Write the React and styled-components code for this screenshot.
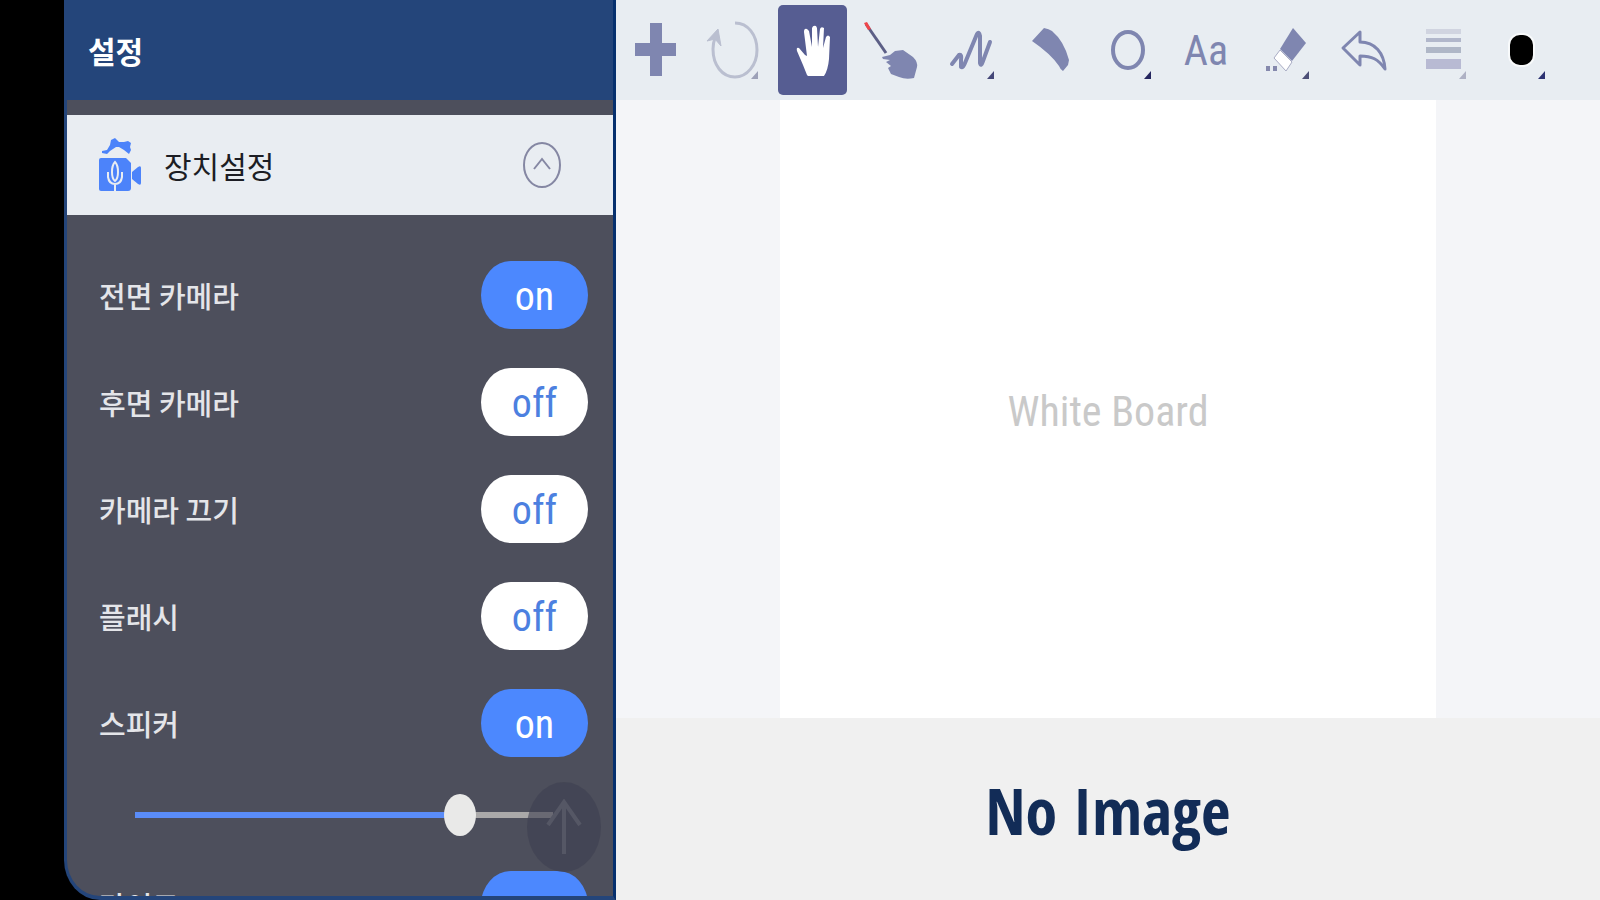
import React, { useState } from "react";
import styled, { createGlobalStyle } from "styled-components";

const GlobalStyle = createGlobalStyle`
  *, *::before, *::after { box-sizing: border-box; }
  body {
    margin: 0;
    background: #000;
    font-family: "Noto Sans", "Noto Sans CJK KR", sans-serif;
  }
  button { font: inherit; border: 0; padding: 0; background: none; cursor: pointer; }
`;

const ink = "#7f86b0";

const Page = styled.div`
  display: grid;
  grid-template-columns: 4fr 34.5fr 61.5fr;
  height: 100vh;
  background: #000;
`;

const Panel = styled.aside`
  grid-column: 2;
  position: relative;
  display: flex;
  flex-direction: column;
  min-width: 0;
  overflow: hidden;
  background: #4d4f5c;
  border: solid #24457a;
  border-width: 0 3px 4px 3px;
  border-right-color: #06306e;
  border-bottom-left-radius: 36px 40px;
`;

const PanelHeader = styled.header`
  flex: none;
  display: flex;
  align-items: center;
  height: 100px;
  padding: 0 20px 0 21px;
  background: #24457a;
`;

const Title = styled.h1`
  margin: 0;
  color: #fff;
  font-family: "Noto Sans CJK KR", sans-serif;
  font-size: 30px;
  line-height: 40px;
  font-weight: 700;
`;

const SectionBar = styled.div`
  flex: none;
  display: flex;
  align-items: center;
  gap: 22px;
  height: 100px;
  margin-top: 15px;
  padding: 0 52px 0 30px;
  background: #e9edf2;
`;

const SectionName = styled.h2`
  flex: 1;
  margin: 0;
  color: #1c1d24;
  font-family: "Noto Sans CJK KR", sans-serif;
  font-size: 30px;
  line-height: 40px;
  font-weight: 400;
`;

const CollapseButton = styled.button`
  display: flex;
`;

const Settings = styled.div`
  display: flex;
  flex-direction: column;
  gap: 39px;
  padding: 46px 25px 0 32px;
`;

const SettingRow = styled.div`
  flex: none;
  display: flex;
  align-items: center;
  justify-content: space-between;
  height: 68px;
`;

const SettingLabel = styled.label`
  color: #e4e5e9;
  font-family: "Noto Sans CJK KR", sans-serif;
  font-size: 29px;
  line-height: 40px;
  font-weight: 500;
`;

const Toggle = styled.button`
  width: 107px;
  height: 68px;
  padding-top: 4px;
  border-radius: 30px / 34px;
  background: ${(p) => (p.$on ? "#4c88fe" : "#fff")};
  color: ${(p) => (p.$on ? "#fff" : "#4c80e0")};
  font-family: "Roboto Condensed", Roboto, sans-serif;
  font-size: 40px;
  line-height: 40px;
`;

const VolumeRow = styled.div`
  flex: none;
  display: flex;
  align-items: center;
  height: 42px;
  margin: -2px 35px -4px 36px;
`;

const Volume = styled.input`
  appearance: none;
  width: 100%;
  height: 42px;
  margin: 0;
  background: transparent;

  &::-webkit-slider-runnable-track {
    height: 6px;
    background: linear-gradient(
      to right,
      #5a8cf8 0 ${(p) => p.value}%,
      #aaa9a9 ${(p) => p.value}% 100%
    );
  }
  &::-webkit-slider-thumb {
    appearance: none;
    width: 32px;
    height: 42px;
    margin-top: -18px;
    border-radius: 50%;
    background: #e9e9e8;
  }
`;

const ScrollTop = styled.button`
  position: absolute;
  right: 12px;
  bottom: 24px;
  display: grid;
  place-items: center;
  width: 74px;
  height: 90px;
  border-radius: 50%;
  background: rgba(62, 63, 80, 0.6);
`;

const Main = styled.main`
  display: grid;
  grid-template-rows: 100px 1fr 182px;
  min-width: 0;
  background: #f4f5f8;
`;

const Toolbar = styled.nav`
  display: grid;
  grid-template-columns: repeat(12, minmax(0, 1fr));
  padding-right: 40px;
  background: #e8edf2;
`;

const Tool = styled.button`
  display: flex;
  align-items: center;
  justify-content: center;
  min-width: 0;
  height: 90px;
  margin: 5px 0;
  color: ${ink};
`;

const ActiveTool = styled(Tool)`
  margin: 5px;
  border-radius: 5px;
  background: #565d92;
  color: #fff;
`;

const ToolDrawing = styled.svg`
  flex: none;
  width: 78px;
  height: 90px;
`;

const TextTool = styled(Tool)`
  padding-top: 2px;
  font-family: "Roboto Condensed", Roboto, sans-serif;
  font-size: 42px;
  line-height: 48px;
  font-weight: 400;
`;

const Workspace = styled.section`
  display: grid;
  grid-template-columns: 1fr 4fr 1fr;
`;

const Board = styled.div`
  grid-column: 2;
  display: grid;
  place-items: center;
  padding-top: 6px;
  background: #fff;
  color: #c9c9c9;
  font-family: "Roboto Condensed", Roboto, sans-serif;
  font-size: 42px;
  line-height: 48px;
`;

const Preview = styled.footer`
  display: grid;
  place-items: center;
  padding-top: 4px;
  background: #f0f0f0;
  color: #122c57;
  font-family: "Open Sans Condensed", "Noto Sans", sans-serif;
  font-size: 64px;
  line-height: 72px;
  font-weight: 600;
`;

function Drawing({ children, corner }) {
  return (
    <ToolDrawing viewBox="0 5 78 90" fill="none" aria-hidden="true">
      {children}
      {corner && <path d="M63 71v8h-7z" fill={corner} />}
    </ToolDrawing>
  );
}

function DeviceIcon() {
  return (
    <svg width="45" height="54" viewBox="0 0 45 54" aria-hidden="true">
      <path
        d="M5 13 10 12 13 7 14 2 18 0 22 4H27L31 3 34 5 33 9 34 12 32 16 27 12 22 9H19L13 13 10 16 5 15Z"
        fill="#4c83fa"
      />
      <path d="M4 20H29L34 25V50Q34 53 31 53H4Q2 53 2 51V22Q2 20 4 20Z" fill="#4c83fa" />
      <path d="M35 34 41 29Q44 27 44 30V45Q44 48 41 46L35 41Z" fill="#4c83fa" />
      <path
        d="M18 24Q21 27 21 34T18 43Q15 41 15 34T18 24Z"
        fill="#4c83fa"
        stroke="#e9edf2"
        strokeWidth="2"
      />
      <path d="M11 34V39Q12 46 18 46T25 39V34M18 46V54" fill="none" stroke="#e9edf2" strokeWidth="2" />
    </svg>
  );
}

function CollapseIcon() {
  return (
    <svg width="38" height="46" viewBox="0 0 38 46" fill="none" stroke="#8587a3" aria-hidden="true">
      <ellipse cx="19" cy="23" rx="18" ry="22" strokeWidth="2" />
      <path d="m11 27 8-10 8 10" strokeWidth="2" />
    </svg>
  );
}

function Setting({ id, name, initial }) {
  const [on, setOn] = useState(initial);
  return (
    <SettingRow>
      <SettingLabel htmlFor={id}>{name}</SettingLabel>
      <Toggle id={id} type="button" role="switch" aria-checked={on} $on={on} onClick={() => setOn(!on)}>
        {on ? "on" : "off"}
      </Toggle>
    </SettingRow>
  );
}

function SettingsPanel() {
  const [volume, setVolume] = useState(80);
  return (
    <Panel>
      <PanelHeader>
        <Title>설정</Title>
      </PanelHeader>
      <SectionBar>
        <DeviceIcon />
        <SectionName>장치설정</SectionName>
        <CollapseButton type="button" aria-label="장치설정 접기">
          <CollapseIcon />
        </CollapseButton>
      </SectionBar>
      <Settings>
        <Setting id="front" name="전면 카메라" initial={true} />
        <Setting id="rear" name="후면 카메라" initial={false} />
        <Setting id="camera-off" name="카메라 끄기" initial={false} />
        <Setting id="flash" name="플래시" initial={false} />
        <Setting id="speaker" name="스피커" initial={true} />
        <VolumeRow>
          <Volume
            type="range"
            min="0"
            max="100"
            aria-label="스피커 음량"
            value={volume}
            onChange={(e) => setVolume(Number(e.target.value))}
          />
        </VolumeRow>
        <Setting id="mic" name="마이크" initial={true} />
      </Settings>
      <ScrollTop type="button" aria-label="맨 위로">
        <svg width="36" height="56" viewBox="0 0 36 56" fill="none" stroke="#555765" strokeWidth="4" aria-hidden="true">
          <path d="M18 55V4M2 26 18 3 34 26" />
        </svg>
      </ScrollTop>
    </Panel>
  );
}

function DrawingTools() {
  return (
    <Toolbar aria-label="그리기 도구">
      <Tool type="button" aria-label="추가">
        <Drawing>
          <path d="M34 23H46V43H60V56H46V76H34V56H19V43H34Z" fill={ink} />
        </Drawing>
      </Tool>
      <Tool type="button" aria-label="회전">
        <Drawing corner="#9da1b8">
          <path d="M40 23C53 23 62 35 62 50S52 77 40 77C27 77 18 65 18 49Q18 43 20 38" stroke="#babfd0" strokeWidth="3" />
          <path d="M12 41 23 29 26 46 20 39Z" fill="#babfd0" stroke="#babfd0" strokeWidth="1" />
        </Drawing>
      </Tool>
      <ActiveTool type="button" aria-label="이동" aria-pressed="true">
        <Drawing>
          <path
            d="M33 75 29 65 23 51Q22 47 25 48L31 55 33 56 30 32Q30 28 33 29L35 31 38 47 38 28Q39 25 42 26L43 28 44 47 46 29Q47 26 50 28L49 48 52 37Q54 34 56 37L55 59Q54 70 50 76H34Z"
            fill="#fff"
          />
        </Drawing>
      </ActiveTool>
      <Tool type="button" aria-label="포인터">
        <Drawing>
          <path d="M14 24 34 53" stroke="#5c5f86" strokeWidth="3" />
          <path d="M12 23 15 22 19 29 16 30Z" fill="#f0454a" />
          <path
            d="M30 57 38 55 43 51 51 50 61 57Q66 62 65 67L62 78Q54 80 47 77L39 74 36 68 39 66 34 62 38 60 31 59Z"
            fill={ink}
          />
        </Drawing>
      </Tool>
      <Tool type="button" aria-label="펜">
        <Drawing corner="#444778">
          <path
            d="M21 64 28 55Q31 54 30 60L30 67Q32 68 34 63L46 34Q48 31 49 36L49 63Q50 67 52 61L59 42"
            stroke={ink}
            strokeWidth="4"
            strokeLinecap="round"
            strokeLinejoin="round"
          />
        </Drawing>
      </Tool>
      <Tool type="button" aria-label="형광펜">
        <Drawing>
          <path d="M22 41 34 28Q39 29 42 31 54 41 59 60L58 65 53 71Q50 69 49 66 41 54 22 41Z" fill={ink} />
        </Drawing>
      </Tool>
      <Tool type="button" aria-label="도형">
        <Drawing corner="#25265f">
          <ellipse cx="40" cy="50" rx="15" ry="18" stroke={ink} strokeWidth="4" />
        </Drawing>
      </Tool>
      <TextTool type="button" aria-label="텍스트">Aa</TextTool>
      <Tool type="button" aria-label="지우개">
        <Drawing corner="#4d5078">
          <path d="M47 28 60 43 46 61 34 49Z" fill={ink} />
          <path d="M34 50 46 62 40 71 28 58Z" fill="#fff" stroke="#a9acc4" />
          <path d="M20 66h4v5h-4zM27 66h4v5h-4z" fill="#8589ad" />
        </Drawing>
      </Tool>
      <Tool type="button" aria-label="되돌리기">
        <Drawing>
          <path
            d="M19 48 36 32V42C51 42 60 53 61 69C54 59 48 56 36 56V65Z"
            stroke={ink}
            strokeWidth="3"
            strokeLinejoin="round"
          />
        </Drawing>
      </Tool>
      <Tool type="button" aria-label="선 굵기">
        <Drawing corner="#aeb1c4">
          <path d="M23 29h35v5H23z" fill="#d0d4e0" />
          <path d="M23 38h35v4H23z" fill="#b1b7cb" />
          <path d="M23 47h35v6H23z" fill="#afb7c7" />
          <path d="M23 59h35v10H23z" fill="#b8bad3" />
        </Drawing>
      </Tool>
      <Tool type="button" aria-label="색상">
        <Drawing corner="#2c3272">
          <rect x="27" y="34" width="25" height="32" rx="11" fill="#000" stroke="#f8fafb" strokeWidth="2" />
        </Drawing>
      </Tool>
    </Toolbar>
  );
}

export default function App() {
  return (
    <>
      <GlobalStyle />
      <Page>
        <SettingsPanel />
        <Main>
          <DrawingTools />
          <Workspace>
            <Board>White Board</Board>
          </Workspace>
          <Preview>No Image</Preview>
        </Main>
      </Page>
    </>
  );
}
